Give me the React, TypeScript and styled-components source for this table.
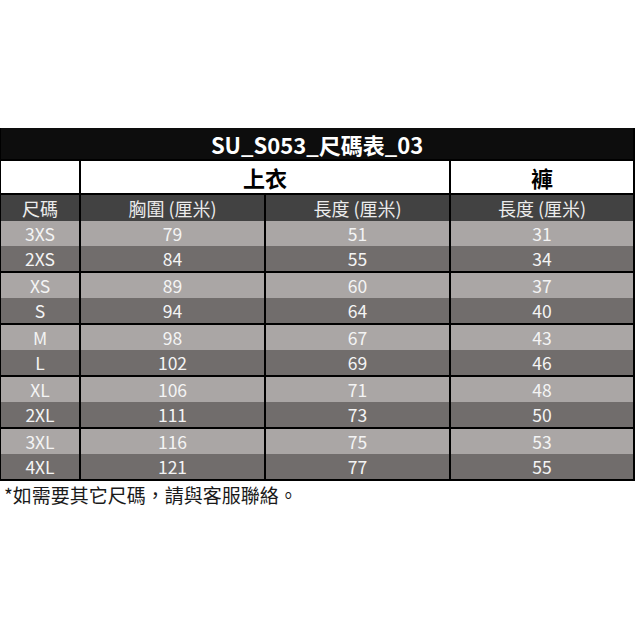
import React from "react";
import styled, { createGlobalStyle } from "styled-components";

const Global = createGlobalStyle`
  html, body { margin: 0; padding: 0; background: #ffffff; }
  body { font-family: "Noto Sans CJK TC", "Noto Sans", sans-serif; }
`;

const Page = styled.div`
  width: 637px;
  height: 637px;
  padding-top: 128px;
  box-sizing: border-box;
`;

const Sheet = styled.div`
  width: 635px;
  display: flex;
  flex-direction: column;
  gap: 2px;
  background: #000;
  padding: 0 2px 2px 1px;
  box-sizing: border-box;
`;

const cols = "78px 183px 183px 182px";

const Title = styled.div`
  height: 31px;
  background: #0d0d0d;
  color: #ffffff;
  font-weight: 700;
  font-size: 22px;
  display: flex;
  align-items: center;
  justify-content: center;
`;

const Row = styled.div<{ $h: number }>`
  display: grid;
  grid-template-columns: ${cols};
  column-gap: 2px;
  height: ${(p) => p.$h}px;
`;

const GroupCell = styled.div<{ $span?: number }>`
  grid-column: span ${(p) => p.$span ?? 1};
  background: #ffffff;
  color: #000;
  font-weight: 700;
  font-size: 22px;
  display: flex;
  align-items: center;
  justify-content: center;
`;

const HeadCell = styled.div`
  background: #424242;
  color: #ececec;
  font-size: 18px;
  display: flex;
  align-items: center;
  justify-content: center;
`;

const Pair = styled.div`
  display: flex;
  flex-direction: column;
`;

const DataCell = styled.div<{ $dark: boolean }>`
  background: ${(p) => (p.$dark ? "#716d6c" : "#aaa6a5")};
  color: #f4f4f4;
  font-size: 17.5px;
  display: flex;
  align-items: center;
  justify-content: center;
`;

const Note = styled.div`
  margin-top: 3px;
  padding-left: 4px;
  font-size: 19px;
  color: #1a1a1a;
  line-height: 22px;
`;

const data: [string, number, number, number][] = [
  ["3XS", 79, 51, 31],
  ["2XS", 84, 55, 34],
  ["XS", 89, 60, 37],
  ["S", 94, 64, 40],
  ["M", 98, 67, 43],
  ["L", 102, 69, 46],
  ["XL", 106, 71, 48],
  ["2XL", 111, 73, 50],
  ["3XL", 116, 75, 53],
  ["4XL", 121, 77, 55],
];

export default function App() {
  const pairs: [string, number, number, number][][] = [];
  for (let i = 0; i < data.length; i += 2) pairs.push(data.slice(i, i + 2));
  return (
    <>
      <Global />
      <Page>
        <Sheet>
          <Title>SU_S053_尺碼表_03</Title>
          <Row $h={32}>
            <GroupCell />
            <GroupCell $span={2}>上衣</GroupCell>
            <GroupCell>褲</GroupCell>
          </Row>
          <Row $h={24}>
            <HeadCell>尺碼</HeadCell>
            <HeadCell>胸圍 (厘米)</HeadCell>
            <HeadCell>長度 (厘米)</HeadCell>
            <HeadCell>長度 (厘米)</HeadCell>
          </Row>
          {pairs.map((pair, pi) => (
            <Pair key={pi}>
              {pair.map((r, ri) => (
                <Row $h={25} key={r[0]}>
                  {r.map((v, ci) => (
                    <DataCell $dark={ri === 1} key={ci}>
                      {v}
                    </DataCell>
                  ))}
                </Row>
              ))}
            </Pair>
          ))}
        </Sheet>
        <Note>*如需要其它尺碼，請與客服聯絡。</Note>
      </Page>
    </>
  );
}
